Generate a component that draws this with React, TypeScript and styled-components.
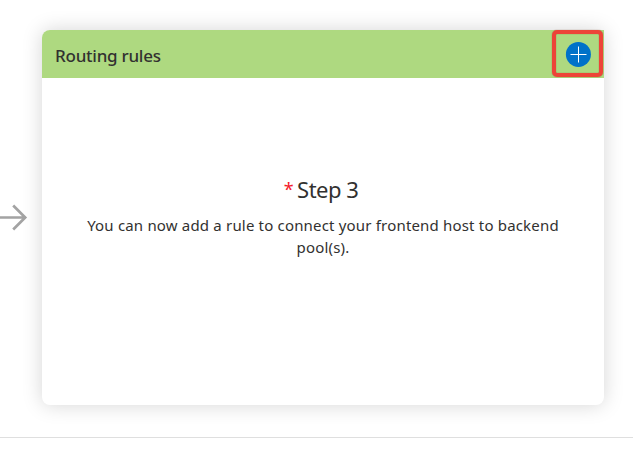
import React from "react";
import styled, { createGlobalStyle } from "styled-components";

const GlobalStyle = createGlobalStyle`
  * { box-sizing: border-box; }
  body { margin: 0; background: #fff; overflow: hidden; }
`;

const Page = styled.main`
  width: 633px;
  height: 455px;
  overflow: hidden;
  color: #323130;
  font-family: "Segoe UI", "Noto Sans", "Open Sans", sans-serif;
`;

const Stage = styled.section`
  display: flex;
  align-items: flex-start;
  height: 438px;
  padding-top: 30px;
  border-bottom: 1px solid #dfdfdf;
`;

const Connector = styled.div`
  display: flex;
  flex: 0 0 42px;
  height: 375px;
  align-items: center;
`;

const Card = styled.article`
  display: flex;
  flex-direction: column;
  width: 562px;
  height: 375px;
  border-radius: 8px;
  background: #fff;
  box-shadow: 0 0 20px rgba(0, 0, 0, 0.17);
`;

const CardHeader = styled.header`
  display: flex;
  align-items: center;
  justify-content: space-between;
  height: 48px;
  padding: 0 1px 0 13px;
  border-radius: 8px 0 0 0;
  background: #aed980;
`;

const CardTitle = styled.h2`
  margin: 0 0 -3px;
  font-size: 17px;
  line-height: 24px;
  font-weight: 500;
  letter-spacing: -0.25px;
  white-space: nowrap;
`;

const AddButton = styled.button`
  display: flex;
  align-self: flex-start;
  align-items: center;
  justify-content: center;
  width: 51px;
  height: 47px;
  padding: 0;
  border: 4px solid #ed4438;
  border-radius: 5px;
  background: transparent;
  box-shadow: 0 0 1px #7b4b30, inset 0 0 1px #7b4b30;
`;

const CardBody = styled.div`
  display: flex;
  flex-direction: column;
  align-items: center;
  padding-top: 95px;
`;

const StepTitle = styled.h3`
  display: flex;
  gap: 4px;
  margin: 0;
  padding-right: 4px;
  font-size: 22px;
  line-height: 32px;
  font-weight: 400;
  letter-spacing: -0.5px;
`;

const Required = styled.span`
  color: #f51b2b;
  font-size: 18px;
  line-height: 32px;
`;

const Description = styled.p`
  width: 490px;
  margin: 9px 0 0;
  font-size: 15px;
  line-height: 22px;
  letter-spacing: 0.18px;
  text-align: center;
`;

export default function App() {
  return (
    <Page>
      <GlobalStyle />
      <Stage>
        <Connector>
          <svg width="28" height="28" viewBox="0 0 28 28" fill="none" stroke="#a3a3a3" strokeWidth="2.7" aria-hidden="true">
            <path d="M0 13.5H25M13.2 1.5L25.2 13.5L13.2 25.5" />
          </svg>
        </Connector>
        <Card>
          <CardHeader>
            <CardTitle>Routing rules</CardTitle>
            <AddButton aria-label="Add routing rule">
              <svg width="27" height="27" viewBox="0 0 27 27" aria-hidden="true">
                <circle cx="14.4" cy="14.4" r="12.5" fill="#0072c9" />
                <path d="M6.5 14.5H22.5M14.5 6.5V22.5" stroke="#fff" strokeWidth="1" />
              </svg>
            </AddButton>
          </CardHeader>
          <CardBody>
            <StepTitle><Required>*</Required><span>Step 3</span></StepTitle>
            <Description>You can now add a rule to connect your frontend host to backend pool(s).</Description>
          </CardBody>
        </Card>
      </Stage>
    </Page>
  );
}
